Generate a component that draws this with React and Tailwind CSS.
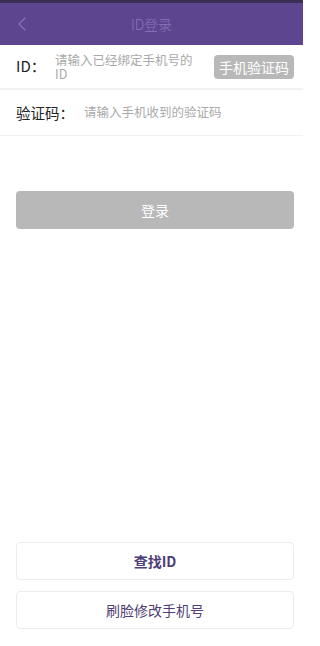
import React from 'react';

const font = { fontFamily: '"PingFang SC", "Noto Sans CJK SC", "Noto Sans", sans-serif' };

const App = () => {
  return (
    <div className="w-[303px] h-[646px] bg-white flex flex-col" style={font}>
      {/* status strip + nav bar */}
      <div className="h-[3px] bg-[#3b3054]" />
      <header className="h-[42px] bg-[#5e4590] flex items-center relative">
        <svg className="absolute left-[18px] top-[14px]" width="8" height="14" viewBox="0 0 8 14" fill="none">
          <path d="M7 1L1 7l6 6" stroke="#8674b0" strokeWidth="1.2" strokeLinecap="round" strokeLinejoin="round" />
        </svg>
        <div className="flex-1 text-center text-[14px] font-light text-[#8a78b6]">ID登录</div>
      </header>

      {/* ID row */}
      <div className="h-[45px] flex items-center pl-4 pr-[9px] border-b-2 border-[#f2f2f2]">
        <span className="w-[39px] text-[15px] text-[#222]">ID：</span>
        <span className="w-[148px] text-[12.5px] leading-[14px] text-[#aaa]">请输入已经绑定手机号的 ID</span>
        <div className="flex-1" />
        <button className="h-[24px] px-[5px] rounded-[4px] bg-[#b8b8b8] text-white text-[14px] leading-none">手机验证码</button>
      </div>

      {/* code row */}
      <div className="h-[46px] flex items-center pl-4 border-b border-[#f0f0f0]">
        <span className="w-[68px] text-[14.5px] text-[#222]">验证码：</span>
        <span className="text-[12.5px] text-[#aaa]">请输入手机收到的验证码</span>
      </div>

      <div className="pl-4 pr-[9px] mt-[55px]">
        <button className="w-full h-[38px] rounded-[4px] bg-[#b8b8b8] text-white text-[14px]">登录</button>
      </div>

      <div className="flex-1" />

      <div className="pl-4 pr-[9px] flex flex-col gap-[11px] pb-[17px]">
        <button className="w-full h-[38px] rounded-[4px] bg-white border border-[#ececec] text-[#4e3e75] text-[14px] font-bold">查找ID</button>
        <button className="w-full h-[38px] rounded-[4px] bg-white border border-[#ececec] text-[#4e3e75] text-[14px]">刷脸修改手机号</button>
      </div>
    </div>
  );
};

export default App;
